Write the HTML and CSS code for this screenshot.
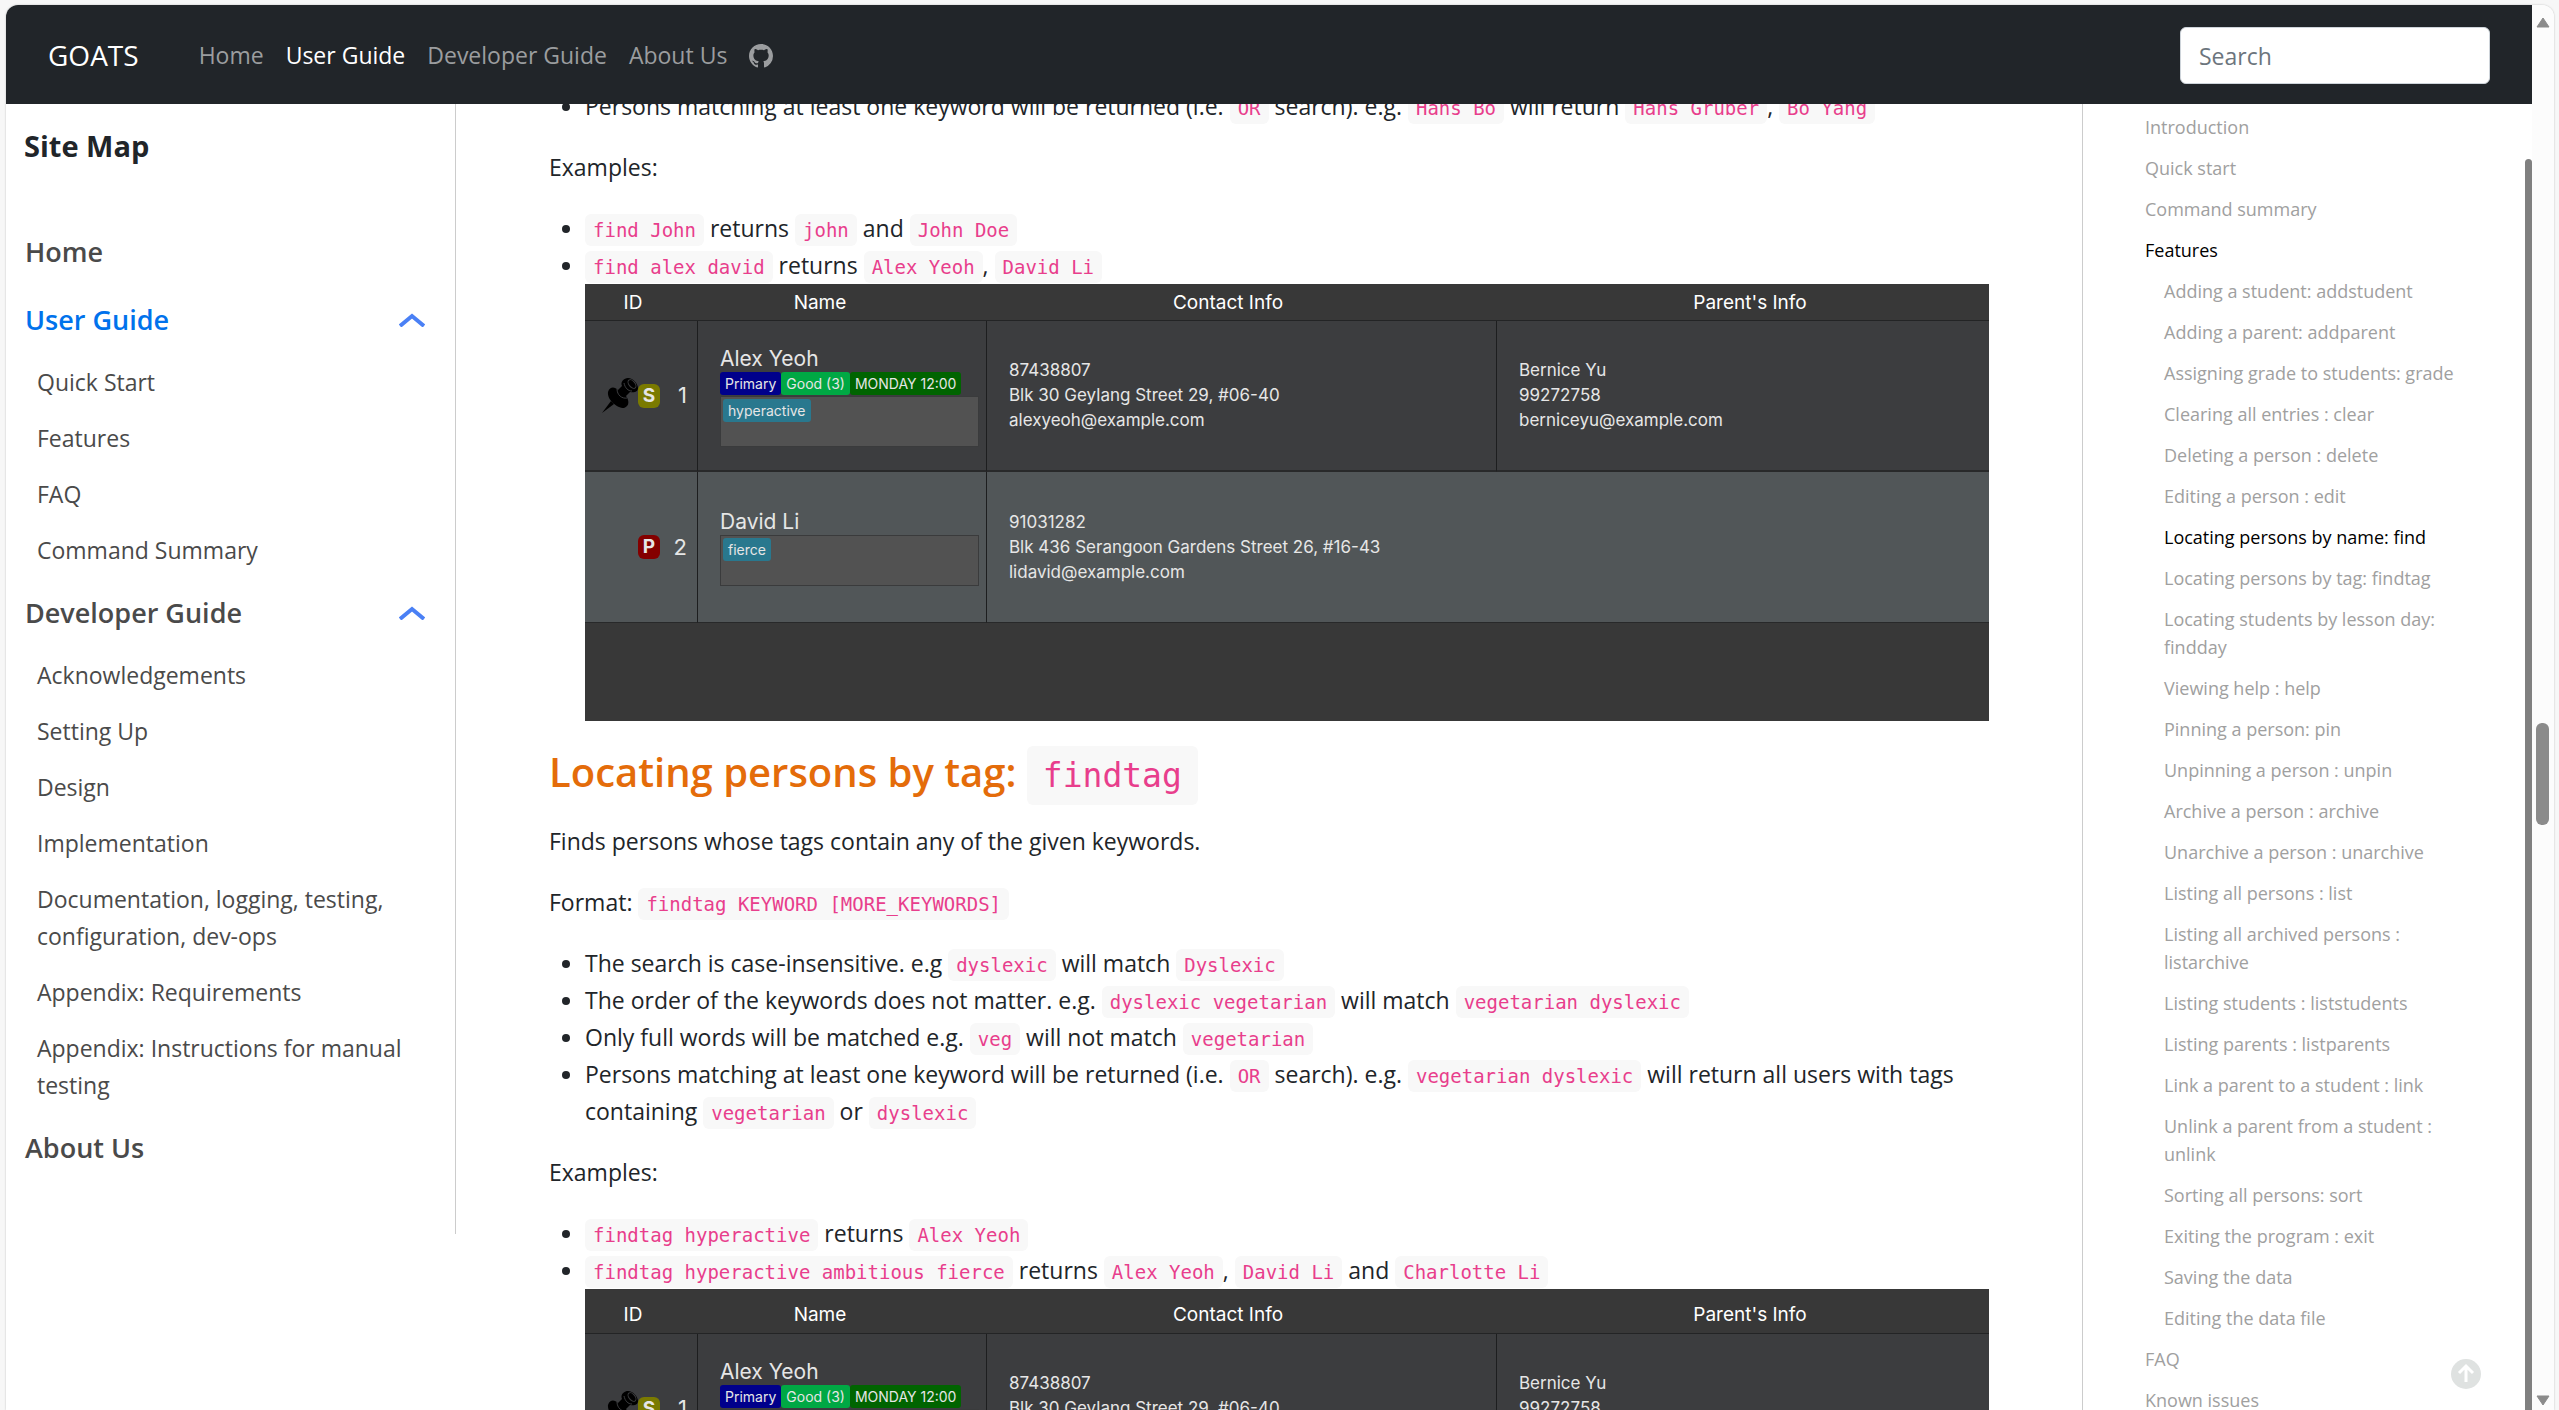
FILE: index.html
```html
<!DOCTYPE html>
<html lang="en">
<head>
<meta charset="utf-8">
<meta name="viewport" content="width=device-width, initial-scale=1">
<title>User Guide - GOATS</title>
<link rel="stylesheet" href="styles.css">
</head>
<body>
<svg class="sprite" aria-hidden="true">
  <symbol id="pin" viewBox="0 0 36 36">
    <path d="M0 35 L9 23 L12 26 Z"/>
    <path d="M6 14 C8 8 13 9 16 12 L20 8 C18 4 22 0 26 0 C31 0 36 6 36 10 C36 14 32 15 28 14 L24 18 C27 22 28 28 22 30 C15 30 5 22 6 14 Z"/>
    <path class="pin-line" d="M15 11 C15 17 20 21 25 20 M22 5 C23 10 26 13 30 13"/>
    <ellipse class="pin-line" cx="30" cy="6" rx="5" ry="3" transform="rotate(50 30 6)"/>
  </symbol>
  <symbol id="chevron" viewBox="0 0 26 14">
    <path d="M1 13 L13 3 L25 13" fill="none" stroke="currentColor" stroke-width="4"/>
  </symbol>
</svg>
<div class="window">
  <div class="page">
    <header class="navbar">
      <a class="brand" href="#">GOATS</a>
      <nav class="nav-links" aria-label="Main">
        <a href="#">Home</a>
        <a href="#" class="current">User Guide</a>
        <a href="#">Developer Guide</a>
        <a href="#">About Us</a>
        <a href="#" class="github" aria-label="GitHub"><svg viewBox="0 0 16 16" width="24" height="24"><path fill="currentColor" d="M8 0C3.58 0 0 3.58 0 8c0 3.54 2.29 6.53 5.47 7.59.4.07.55-.17.55-.38 0-.19-.01-.82-.01-1.49-2.01.37-2.53-.49-2.69-.94-.09-.23-.48-.94-.82-1.13-.28-.15-.68-.52-.01-.53.63-.01 1.08.58 1.23.82.72 1.21 1.87.87 2.33.66.07-.52.28-.87.51-1.07-1.78-.2-3.64-.89-3.64-3.95 0-.87.31-1.59.82-2.15-.08-.2-.36-1.02.08-2.12 0 0 .67-.21 2.2.82.64-.18 1.32-.27 2-.27s1.36.09 2 .27c1.53-1.04 2.2-.82 2.2-.82.44 1.1.16 1.92.08 2.12.51.56.82 1.27.82 2.15 0 3.07-1.87 3.75-3.65 3.95.29.25.54.73.54 1.48 0 1.07-.01 1.93-.01 2.2 0 .21.15.46.55.38A8.01 8.01 0 0 0 16 8c0-4.42-3.58-8-8-8z"/></svg></a>
      </nav>
      <input class="search" type="search" placeholder="Search" aria-label="Search">
    </header>
    <div class="layout">
      <nav class="sitemap" aria-label="Site map">
        <h2>Site Map</h2>
        <ul class="site-groups">
          <li><a class="group" href="#">Home</a></li>
          <li>
            <div class="group-row"><a class="group active" href="#">User Guide</a><button type="button" aria-label="Collapse User Guide"><svg width="26" height="14"><use href="#chevron"/></svg></button></div>
            <ul class="site-sub">
              <li><a href="#">Quick Start</a></li>
              <li><a href="#">Features</a></li>
              <li><a href="#">FAQ</a></li>
              <li><a href="#">Command Summary</a></li>
            </ul>
          </li>
          <li>
            <div class="group-row"><a class="group" href="#">Developer Guide</a><button type="button" aria-label="Collapse Developer Guide"><svg width="26" height="14"><use href="#chevron"/></svg></button></div>
            <ul class="site-sub">
              <li><a href="#">Acknowledgements</a></li>
              <li><a href="#">Setting Up</a></li>
              <li><a href="#">Design</a></li>
              <li><a href="#">Implementation</a></li>
              <li><a href="#">Documentation, logging, testing, configuration, dev-ops</a></li>
              <li><a href="#">Appendix: Requirements</a></li>
              <li><a href="#">Appendix: Instructions for manual testing</a></li>
            </ul>
          </li>
          <li><a class="group" href="#">About Us</a></li>
        </ul>
      </nav>
      <main class="content">
        <ul>
          <li>Persons matching at least one keyword will be returned (i.e. <code>OR</code> search). e.g. <code>Hans Bo</code> will return <code>Hans Gruber</code>, <code>Bo Yang</code></li>
        </ul>
        <p>Examples:</p>
        <ul>
          <li><code>find John</code> returns <code>john</code> and <code>John Doe</code></li>
          <li><code>find alex david</code> returns <code>Alex Yeoh</code>, <code>David Li</code>
            <div class="shot">
              <table>
                <colgroup><col class="c-id"><col class="c-name"><col class="c-contact"><col class="c-parent"></colgroup>
                <thead><tr><th>ID</th><th>Name</th><th>Contact Info</th><th>Parent's Info</th></tr></thead>
                <tbody>
                  <tr>
                    <td class="id"><div class="id-row"><svg class="pin" width="36" height="36"><use href="#pin"/></svg><span class="badge student">S</span><span class="num">1</span></div></td>
                    <td class="name"><div class="person">Alex Yeoh</div><div class="chips"><span class="chip primary">Primary</span><span class="chip good">Good (3)</span><span class="chip day">MONDAY 12:00</span></div><div class="tagbox"><span class="chip tag">hyperactive</span></div></td>
                    <td class="info">87438807<br>Blk 30 Geylang Street 29, #06-40<br>alexyeoh@example.com</td>
                    <td class="info">Bernice Yu<br>99272758<br>berniceyu@example.com</td>
                  </tr>
                  <tr>
                    <td class="id"><div class="id-row"><span class="badge parent">P</span><span class="num">2</span></div></td>
                    <td class="name"><div class="person">David Li</div><div class="tagbox"><span class="chip tag">fierce</span></div></td>
                    <td class="info" colspan="2">91031282<br>Blk 436 Serangoon Gardens Street 26, #16-43<br>lidavid@example.com</td>
                  </tr>
                </tbody>
              </table>
            </div>
          </li>
        </ul>
        <h3>Locating persons by tag: <code>findtag</code></h3>
        <p>Finds persons whose tags contain any of the given keywords.</p>
        <p>Format: <code>findtag KEYWORD [MORE_KEYWORDS]</code></p>
        <ul>
          <li>The search is case-insensitive. e.g <code>dyslexic</code> will match <code>Dyslexic</code></li>
          <li>The order of the keywords does not matter. e.g. <code>dyslexic vegetarian</code> will match <code>vegetarian dyslexic</code></li>
          <li>Only full words will be matched e.g. <code>veg</code> will not match <code>vegetarian</code></li>
          <li>Persons matching at least one keyword will be returned (i.e. <code>OR</code> search). e.g. <code>vegetarian dyslexic</code> will return all users with tags containing <code>vegetarian</code> or <code>dyslexic</code></li>
        </ul>
        <p>Examples:</p>
        <ul>
          <li><code>findtag hyperactive</code> returns <code>Alex Yeoh</code></li>
          <li><code>findtag hyperactive ambitious fierce</code> returns <code>Alex Yeoh</code>, <code>David Li</code> and <code>Charlotte Li</code>
            <div class="shot tall-head">
              <table>
                <colgroup><col class="c-id"><col class="c-name"><col class="c-contact"><col class="c-parent"></colgroup>
                <thead><tr><th>ID</th><th>Name</th><th>Contact Info</th><th>Parent's Info</th></tr></thead>
                <tbody>
                  <tr>
                    <td class="id"><div class="id-row"><svg class="pin" width="36" height="36"><use href="#pin"/></svg><span class="badge student">S</span><span class="num">1</span></div></td>
                    <td class="name"><div class="person">Alex Yeoh</div><div class="chips"><span class="chip primary">Primary</span><span class="chip good">Good (3)</span><span class="chip day">MONDAY 12:00</span></div><div class="tagbox"><span class="chip tag">hyperactive</span></div></td>
                    <td class="info">87438807<br>Blk 30 Geylang Street 29, #06-40<br>alexyeoh@example.com</td>
                    <td class="info">Bernice Yu<br>99272758<br>berniceyu@example.com</td>
                  </tr>
                </tbody>
              </table>
            </div>
          </li>
        </ul>
      </main>
      <aside class="toc">
        <nav aria-label="On this page">
          <ul>
            <li><a href="#">Introduction</a></li>
            <li><a href="#">Quick start</a></li>
            <li><a href="#">Command summary</a></li>
            <li><a href="#" class="current">Features</a>
              <ul>
                <li><a href="#">Adding a student: addstudent</a></li>
                <li><a href="#">Adding a parent: addparent</a></li>
                <li><a href="#">Assigning grade to students: grade</a></li>
                <li><a href="#">Clearing all entries : clear</a></li>
                <li><a href="#">Deleting a person : delete</a></li>
                <li><a href="#">Editing a person : edit</a></li>
                <li><a href="#" class="current">Locating persons by name: find</a></li>
                <li><a href="#">Locating persons by tag: findtag</a></li>
                <li><a href="#">Locating students by lesson day: findday</a></li>
                <li><a href="#">Viewing help : help</a></li>
                <li><a href="#">Pinning a person: pin</a></li>
                <li><a href="#">Unpinning a person : unpin</a></li>
                <li><a href="#">Archive a person : archive</a></li>
                <li><a href="#">Unarchive a person : unarchive</a></li>
                <li><a href="#">Listing all persons : list</a></li>
                <li><a href="#">Listing all archived persons : listarchive</a></li>
                <li><a href="#">Listing students : liststudents</a></li>
                <li><a href="#">Listing parents : listparents</a></li>
                <li><a href="#">Link a parent to a student : link</a></li>
                <li><a href="#">Unlink a parent from a student : unlink</a></li>
                <li><a href="#">Sorting all persons: sort</a></li>
                <li><a href="#">Exiting the program : exit</a></li>
                <li><a href="#">Saving the data</a></li>
                <li><a href="#">Editing the data file</a></li>
              </ul>
            </li>
            <li><a href="#">FAQ</a></li>
            <li><a href="#">Known issues</a></li>
          </ul>
        </nav>
        <div class="toc-thumb"></div>
        <button class="to-top" type="button" aria-label="Back to top"><svg width="30" height="30" viewBox="0 0 30 30"><circle cx="15" cy="15" r="15" fill="#dfe2e1"/><path d="M15 23V8M8 14l7-7 7 7" fill="none" stroke="#fff" stroke-width="3"/></svg></button>
      </aside>
    </div>
  </div>
  <div class="scrollbar" aria-hidden="true">
    <svg width="14" height="11" viewBox="0 0 14 11"><path d="M7 1L13 10H1Z" fill="#8b8b8b" stroke="#8b8b8b" stroke-linejoin="round"/></svg>
    <div class="scroll-track"><div class="scroll-thumb"></div></div>
    <svg width="14" height="11" viewBox="0 0 14 11"><path d="M7 10L1 1H13Z" fill="#8b8b8b" stroke="#8b8b8b" stroke-linejoin="round"/></svg>
  </div>
</div>
</body>
</html>
```
FILE: styles.css
```css
* { box-sizing: border-box; }

body {
  margin: 0;
  height: 100vh;
  padding: 5px 5px 0 6px;
  overflow: hidden;
  background: #f7f7f7;
  color: #212529;
  font-family: "Open Sans", "Noto Sans", sans-serif;
  font-size: 23px;
  line-height: 37px;
}

a { color: inherit; text-decoration: none; }
ul { margin: 0; padding: 0; list-style: none; }
button { padding: 0; border: 0; background: none; cursor: pointer; }
svg { display: block; }
.sprite { position: absolute; width: 0; height: 0; }
.pin-line { fill: none; stroke: #3c3d3f; stroke-width: 1; }

.window {
  display: flex;
  height: 100%;
  overflow: hidden;
  background: #fff;
  border-radius: 12px 12px 0 0;
  box-shadow: 0 0 2px #b8b8b8;
}
.page {
  flex: 1;
  min-width: 0;
  display: flex;
  flex-direction: column;
}

/* Top bar */
.navbar {
  flex: none;
  display: flex;
  align-items: center;
  height: 99px;
  padding: 2px 42px 0;
  background: #212529;
  color: #fff;
}
.brand { margin-right: 60px; font-size: 28px; }
.nav-links { display: flex; align-items: center; gap: 22px; color: #9b9d9f; }
.nav-links .current { color: #fff; }
.search {
  width: 310px;
  height: 57px;
  margin-left: auto;
  padding: 0 18px;
  border: 1px solid #ced4da;
  border-radius: 6px;
  background: #fff;
  color: #212529;
  font: inherit;
}
.search::placeholder { color: #6c757d; opacity: 1; }

.layout {
  flex: 1;
  min-height: 0;
  display: grid;
  grid-template-columns: 450px minmax(0, 1fr) 450px;
  align-items: start;
  overflow: hidden;
}

/* Site map */
.sitemap {
  padding: 21px 30px 65px 18px;
  border-right: 1px solid #ccc;
  color: #4a4a4a;
}
.sitemap h2 {
  margin: 0 0 64px;
  color: #212529;
  font-size: 29px;
  line-height: 42px;
  font-weight: 700;
}
.site-groups > li { padding: 0 0 26px 1px; }
.site-groups > li:last-child { padding-bottom: 0; }
.group-row { display: flex; justify-content: space-between; align-items: center; }
.group-row button { color: #4a80f5; }
.group { font-size: 27px; line-height: 42px; font-weight: 600; }
.group.active { color: #0072ec; }
.site-sub {
  display: flex;
  flex-direction: column;
  gap: 19px;
  padding: 23px 0 0 12px;
}
.site-groups > li:has(.site-sub) { padding-bottom: 23px; }

/* Guide text */
.content { padding: 0 93px; margin-top: -16px; }
.content p { margin: 0 0 24px; }
.content > ul {
  margin-bottom: 24px;
  padding-left: 36px;
  list-style: disc;
}
code {
  padding: 5px 8px;
  border-radius: 6px;
  background: #f8f8f8;
  color: #e83e8c;
  font-family: "DejaVu Sans Mono", "Liberation Mono", monospace;
  font-size: 19px;
  line-height: 20px;
}
h3 {
  margin: 0 0 24px;
  color: #e46c0a;
  font-size: 40px;
  line-height: 54px;
  font-weight: 600;
}
h3 code { padding: 10px 16px; font-size: 33px; line-height: 34px; font-weight: 400; }

/* Contact table figure */
.shot {
  height: 437px;
  background: #383838;
  color: #e6e6e6;
  font-family: Inter, "Liberation Sans", sans-serif;
  font-size: 17px;
  line-height: 25px;
}
.shot table { width: 100%; table-layout: fixed; border-collapse: separate; border-spacing: 0; }
.c-id { width: 113px; }
.c-name { width: 289px; }
.c-contact { width: 510px; }
.shot th {
  height: 37px;
  padding: 0;
  border-bottom: 1px solid #232425;
  color: #fff;
  font-size: 19px;
  font-weight: 400;
}
.shot th:nth-child(1) { padding-right: 17px; }
.shot th:nth-child(2) { padding-right: 45px; }
.shot th:nth-child(3) { padding-right: 28px; }
.shot th:nth-child(4) { padding-left: 14px; }
.shot.tall-head th { height: 45px; padding-top: 6px; }
.shot td {
  height: 151px;
  padding: 0 7px 0 22px;
  border-right: 1px solid #1d1e1f;
  border-bottom: 2px solid #28292a;
  background: #3c3d3f;
  vertical-align: middle;
}
.shot td:last-child { border-right: 0; }
.shot tr:nth-child(2) td { background: #515658; border-bottom-width: 1px; }
.shot td.id { padding: 0 10px 0 0; }
.id-row { display: flex; align-items: center; justify-content: flex-end; }
.badge {
  width: 22px;
  height: 24px;
  border-radius: 6px;
  font-size: 19px;
  line-height: 24px;
  font-weight: 700;
  text-align: center;
}
.student { background: #7a7a00; }
.parent { background: #840000; }
.num { width: 27px; font-size: 22px; text-align: right; }
.person { font-size: 21px; line-height: 27px; }
.chips { display: flex; margin-bottom: 1px; }
.chip {
  padding: 0 5px;
  border-radius: 3px;
  font-size: 14px;
  line-height: 23px;
}
.primary { background: #00008b; }
.good { background: #00a844; }
.day { background: #006400; }
.tag { background: #29788e; }
.tagbox {
  display: flex;
  align-items: flex-start;
  height: 51px;
  padding: 2px;
  border: 1px solid #3a3b3c;
  background: #525252;
}

/* Page contents on the right */
.toc {
  position: relative;
  align-self: stretch;
  min-height: 0;
  padding: 9px 48px 0 62px;
  border-left: 1px solid #ccc;
  color: #a0a0a0;
  font-size: 18px;
  line-height: 28px;
}
.toc ul { display: flex; flex-direction: column; gap: 13px; }
.toc ul ul { padding: 13px 0 0 19px; }
.toc .current { color: #000; }
.toc-thumb {
  position: absolute;
  top: 55px;
  right: 0;
  bottom: 0;
  width: 7px;
  border-radius: 4px 4px 0 0;
  background: #808080;
}
.to-top { position: fixed; right: 78px; bottom: 21px; }

.scrollbar {
  flex: none;
  display: flex;
  flex-direction: column;
  align-items: flex-start;
  width: 22px;
  padding: 12px 0 4px 4px;
  background: #fcfcfc;
}
.scroll-track { flex: 1; padding-top: 695px; }
.scroll-thumb {
  width: 13px;
  height: 102px;
  border-radius: 6px;
  background: #8b8b8b;
}
```
